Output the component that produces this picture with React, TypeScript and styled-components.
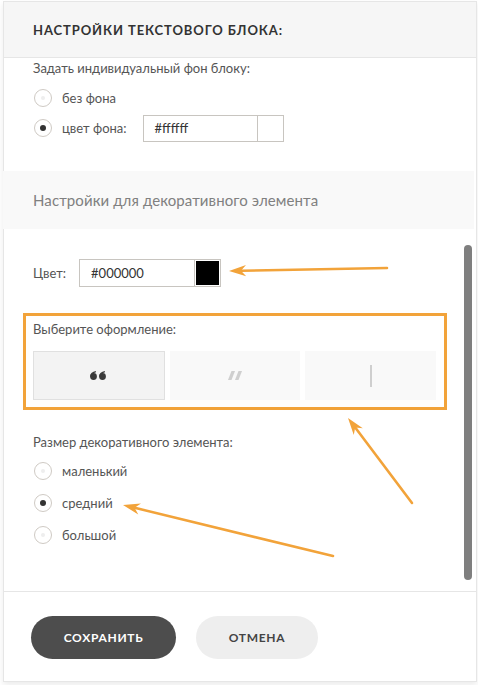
import React from "react";
import styled, { createGlobalStyle } from "styled-components";

const GlobalStyle = createGlobalStyle`
  body {
    margin: 0;
    background: #fff;
    font-family: Lato, "Noto Sans", sans-serif;
    color: #555;
  }
`

const Page = styled.div`
  position: relative;
  width: 478px;
  height: 685px;
  padding-top: 1px;
  box-sizing: border-box;
  overflow: hidden;
`

const Modal = styled.div`
  margin-left: 3px;
  width: 474px;
  box-sizing: border-box;
  border: 1px solid #e6e6e6;
  background: #fff;
  box-shadow: 0 3px 6px rgba(0, 0, 0, 0.08);
`

const Header = styled.div`
  height: 55px;
  display: flex;
  align-items: center;
  padding-left: 29px;
  background: #f6f6f6;
  border-bottom: 1px solid #e6e6e6;
  font-size: 13px;
  font-weight: 700;
  letter-spacing: 0.9px;
  color: #333;
`

const Section = styled.div`
  padding: 0 0 28px 29px;
`

const Label = styled.div<{ $gap?: number }>`
  font-size: 13px;
  line-height: 20px;
  color: #555;
  margin-bottom: ${({ $gap }) => $gap ?? 5}px;
`

const RadioRow = styled.div<{ $h?: number }>`
  display: flex;
  align-items: center;
  height: ${({ $h }) => $h ?? 30}px;
  font-size: 13px;
  color: #555;
`

const RadioCircle = styled.span<{ $on?: boolean }>`
  width: 18px;
  height: 18px;
  box-sizing: border-box;
  margin-left: 1px;
  margin-right: 10px;
  border: 1px solid #cfcac4;
  border-radius: 50%;
  display: flex;
  align-items: center;
  justify-content: center;
  &::after {
    content: "";
    width: ${({ $on }) => ($on ? 6 : 4)}px;
    height: ${({ $on }) => ($on ? 6 : 4)}px;
    border-radius: 50%;
    background: ${({ $on }) => ($on ? "#333" : "#eee")};
  }
`

const ColorField = styled.div<{ $left: number; $h: number }>`
  display: flex;
  height: ${({ $h }) => $h}px;
  margin-left: ${({ $left }) => $left}px;
`

const ColorText = styled.div<{ $w: number }>`
  width: ${({ $w }) => $w}px;
  box-sizing: border-box;
  border: 1px solid #c8c5c0;
  border-right: none;
  padding-left: 11px;
  display: flex;
  align-items: center;
  font-size: 13px;
  color: #333;
`

const Swatch = styled.div<{ $color: string }>`
  width: 27px;
  box-sizing: border-box;
  border: 1px solid #c8c5c0;
  padding: 1px;
  &::after {
    content: "";
    display: block;
    height: 100%;
    background: ${({ $color }) => $color};
  }
`

const DecorBand = styled.div`
  height: 58px;
  margin: 0 2px 0 -1px;
  padding-left: 30px;
  display: flex;
  align-items: center;
  background: #f9f9f9;
  font-size: 15px;
  letter-spacing: 0.1px;
  color: #808080;
`

const ScrollArea = styled.div`
  position: relative;
  height: 362px;
  padding: 30px 38px 0 29px;
  box-sizing: border-box;
  overflow: hidden;
`

const Thumb = styled.div`
  position: absolute;
  top: 16px;
  right: 4px;
  width: 8px;
  height: 335px;
  border-radius: 4px;
  background: #7f7f7f;
`

const ColorRow = styled.div`
  display: flex;
  align-items: center;
  font-size: 13px;
  color: #555;
`

const DesignBlock = styled.div`
  position: relative;
  margin-top: 32px;
  &::after {
    content: "";
    position: absolute;
    left: -10px;
    right: -9px;
    top: -6px;
    bottom: -10px;
    border: 3px solid #f2a33a;
  }
`

const Tiles = styled.div`
  display: grid;
  grid-template-columns: 132px 130px 131px;
  gap: 5px;
`

const Tile = styled.div<{ $active?: boolean }>`
  height: 49px;
  box-sizing: border-box;
  display: flex;
  align-items: center;
  justify-content: center;
  background: ${({ $active }) => ($active ? "#f3f3f3" : "#f9f9f9")};
  border: 1px solid ${({ $active }) => ($active ? "#e0e0e0" : "#f9f9f9")};
`

const SizeBlock = styled.div`
  margin-top: 32px;
`

const Footer = styled.div`
  display: flex;
  gap: 20px;
  padding: 24px 0 22px 27px;
  border-top: 1px solid #e6e6e6;
`

const Button = styled.div<{ $primary?: boolean; $w: number }>`
  width: ${({ $w }) => $w}px;
  height: 43px;
  border-radius: 22px;
  display: flex;
  align-items: center;
  justify-content: center;
  font-size: 12px;
  font-weight: 700;
  letter-spacing: 0.7px;
  background: ${({ $primary }) => ($primary ? "#4d4d4d" : "#eeeeee")};
  color: ${({ $primary }) => ($primary ? "#fff" : "#444")};
`

const Arrows = styled.svg`
  position: absolute;
  left: 0;
  top: 0;
  pointer-events: none;
`

function Radio({ on, label, h }: { on?: boolean; label: string; h?: number }) {
  return (
    <RadioRow $h={h}>
      <RadioCircle $on={on} />
      {label}
    </RadioRow>
  )
}

function QuoteIcon() {
  return (
    <svg width="18" height="9" viewBox="0 0 18 9">
      {[0, 9].map(x => (
        <g key={x} fill="#3a3a3a" transform={`translate(${x} 0)`}>
          <circle cx="3.5" cy="5.5" r="3.4" />
          <path d="M0.2,5.4 C0.3,2.5 2.4,0.5 5.8,0 L6,1.3 C4,1.9 3,3.1 2.8,4.6 Z" />
        </g>
      ))}
    </svg>
  )
}

function SlashIcon() {
  return (
    <svg width="14" height="9" viewBox="0 0 14 9">
      <polygon points="3.5,0 7,0 3.5,9 0,9" fill="#cfcfcf" />
      <polygon points="10.5,0 14,0 10.5,9 7,9" fill="#cfcfcf" />
    </svg>
  )
}

function LineIcon() {
  return (
    <svg width="2" height="22" viewBox="0 0 2 22">
      <rect x="0" y="0" width="2" height="22" fill="#cfcfcf" />
    </svg>
  )
}

function Arrow({ x1, y1, x2, y2 }: { x1: number; y1: number; x2: number; y2: number }) {
  const a = Math.atan2(y2 - y1, x2 - x1)
  const len = 18
  const spread = 0.32
  const p1 = [x2 - len * Math.cos(a - spread), y2 - len * Math.sin(a - spread)]
  const p2 = [x2 - len * Math.cos(a + spread), y2 - len * Math.sin(a + spread)]
  const bx = x2 - 12 * Math.cos(a)
  const by = y2 - 12 * Math.sin(a)
  return (
    <g>
      <line x1={x1} y1={y1} x2={bx} y2={by} stroke="#f2a33a" strokeWidth="2.6" strokeLinecap="round" />
      <polygon points={`${x2},${y2} ${p1[0]},${p1[1]} ${bx},${by} ${p2[0]},${p2[1]}`} fill="#f2a33a" />
    </g>
  )
}

export default function App() {
  return (
    <Page>
      <GlobalStyle />
      <Modal>
        <Header>НАСТРОЙКИ ТЕКСТОВОГО БЛОКА:</Header>
        <Section>
          <Label>Задать индивидуальный фон блоку:</Label>
          <Radio label="без фона" />
          <RadioRow>
            <RadioCircle $on />
            цвет фона:
            <ColorField $left={16} $h={27}>
              <ColorText $w={114}>#ffffff</ColorText>
              <Swatch $color="#fff" />
            </ColorField>
          </RadioRow>
        </Section>
        <DecorBand>Настройки для декоративного элемента</DecorBand>
        <ScrollArea>
          <ColorRow>
            Цвет:
            <ColorField $left={13} $h={28}>
              <ColorText $w={115}>#000000</ColorText>
              <Swatch $color="#000" />
            </ColorField>
          </ColorRow>
          <DesignBlock>
            <Label $gap={12}>Выберите оформление:</Label>
            <Tiles>
              <Tile $active><QuoteIcon /></Tile>
              <Tile><SlashIcon /></Tile>
              <Tile><LineIcon /></Tile>
            </Tiles>
          </DesignBlock>
          <SizeBlock>
            <Label $gap={3}>Размер декоративного элемента:</Label>
            <Radio h={32} label="маленький" />
            <Radio h={32} on label="средний" />
            <Radio h={32} label="большой" />
          </SizeBlock>
          <Thumb />
        </ScrollArea>
        <Footer>
          <Button $primary $w={145}>СОХРАНИТЬ</Button>
          <Button $w={122}>ОТМЕНА</Button>
        </Footer>
      </Modal>
      <Arrows width="478" height="685" viewBox="0 0 478 685">
        <Arrow x1={387} y1={268} x2={229} y2={271} />
        <Arrow x1={412} y1={503} x2={348} y2={418} />
        <Arrow x1={333} y1={556} x2={123} y2={505} />
      </Arrows>
    </Page>
  )
}
